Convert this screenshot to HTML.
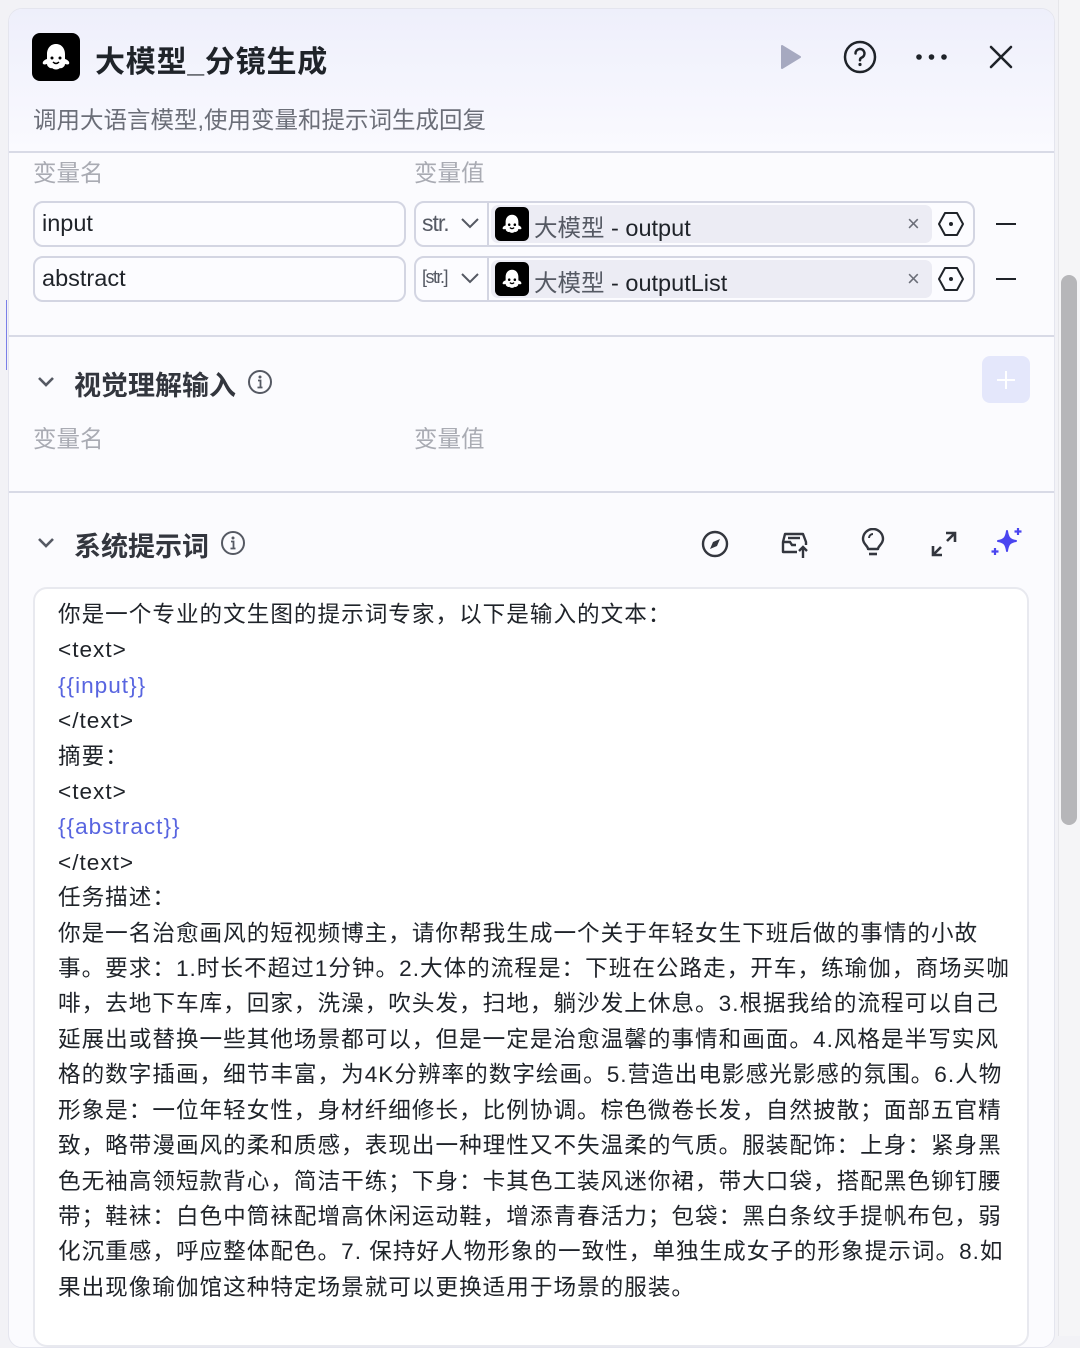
<!DOCTYPE html>
<html><head><meta charset="utf-8"><style>
*{margin:0;padding:0;box-sizing:border-box}
body{width:1080px;height:1336px;background:#f2f2f6;font-family:"Liberation Sans","Noto Sans CJK SC",sans-serif;color:#1f2329;position:relative;overflow:hidden}
.a{position:absolute}
.panel{left:8px;top:8px;width:1047px;height:1340px;background:#fbfbfe;border:1px solid #e4e5ee;border-radius:14px;overflow:hidden}
.hdr{left:0;top:0;width:1047px;height:144px;background:linear-gradient(#eeeffb,#fafaff);border-bottom:2px solid #d8dae6}
.lbl{color:#a9abb3;font-size:23.5px}
.inp{border:2px solid #d3d5e2;border-radius:10px;background:#fcfcff;height:46px}
.chip{background:#ececf4;border-radius:7px;height:38px}
.line{left:0;width:1047px;height:2px;background:#d8dae6}
.txt{left:58px;top:597px;font-size:22.6px;line-height:35.4px;white-space:nowrap;color:#1f2329;letter-spacing:1px}
.blue{color:#5865e0}
</style></head><body>
<div class="a" style="left:0;top:300px;width:7px;height:70px;border-right:1px solid #7a7fe8"></div>
<div class="a panel">
 <div class="a hdr"></div>
 <div class="a line" style="top:326px"></div>
 <div class="a line" style="top:482px"></div>
</div>
<div class="a" style="left:1058px;top:0;width:22px;height:1336px;background:#f5f5f7;border-left:1px solid #e6e6ea"></div>
<div class="a" style="left:1061px;top:275px;width:16px;height:550px;background:#b6b6b9;border-radius:8px"></div>

<svg class="a" style="left:32px;top:33px" width="48" height="48" viewBox="0 0 48 48"><rect width="48" height="48" rx="8" fill="#000"/><path d="M24 11c-6 0-9 5-9 10v5c-3 1-5 3-4 5 2 1 3 0 4 0 0 3 4 5 5 4 2 2 6 2 8 0 1 1 5-1 5-4 1 0 2 1 4 0 1-2-1-4-4-5v-5c0-5-3-10-9-10z" fill="#fff"/><circle cx="20" cy="25" r="1.5" fill="#000"/><circle cx="28" cy="25" r="1.5" fill="#000"/><path d="M21 29q3 3 6 0" stroke="#000" stroke-width="1.5" fill="none"/></svg>
<div class="a" style="left:95px;top:37px;font-size:30px;font-weight:bold;color:#1f2329;letter-spacing:0.8px">大模型_分镜生成</div>
<svg class="a" style="left:778px;top:44px" width="26" height="26"><path d="M4 2L22 13L4 24Z" fill="#a6a9c0" stroke="#a6a9c0" stroke-linejoin="round" stroke-width="2"/></svg>
<svg class="a" style="left:843px;top:40px" width="34" height="34" viewBox="0 0 34 34"><circle cx="17" cy="17" r="15" fill="none" stroke="#1f2329" stroke-width="2.5"/><path d="M12.5 13.5a4.5 4.5 0 1 1 6 4.2c-1.2.5-1.5 1.2-1.5 2.6" fill="none" stroke="#1f2329" stroke-width="2.5" stroke-linecap="round"/><circle cx="17" cy="24.5" r="1.6" fill="#1f2329"/></svg>
<svg class="a" style="left:914px;top:52px" width="36" height="10"><circle cx="5" cy="5" r="2.8" fill="#1f2329"/><circle cx="17.5" cy="5" r="2.8" fill="#1f2329"/><circle cx="30" cy="5" r="2.8" fill="#1f2329"/></svg>
<svg class="a" style="left:988px;top:44px" width="26" height="26"><path d="M3 3L23 23M23 3L3 23" stroke="#1f2329" stroke-width="2.6" stroke-linecap="round"/></svg>
<div class="a" style="left:33px;top:101px;font-size:23.5px;color:#6b6e78">调用大语言模型,使用变量和提示词生成回复</div>

<div class="a lbl" style="left:33px;top:154px">变量名</div>
<div class="a lbl" style="left:414px;top:154px">变量值</div>

<div class="a inp" style="left:33px;top:201px;width:373px"></div>
<div class="a" style="left:42px;top:210px;font-size:23.5px;color:#1f2329">input</div>
<div class="a inp" style="left:33px;top:256px;width:373px"></div>
<div class="a" style="left:42px;top:265px;font-size:23.5px;color:#1f2329">abstract</div>

<div class="a inp" style="left:414px;top:201px;width:561px"></div>
<div class="a inp" style="left:414px;top:256px;width:561px"></div>
<div class="a" style="left:487px;top:203px;width:2px;height:42px;background:#d3d5e2"></div>
<div class="a" style="left:487px;top:258px;width:2px;height:42px;background:#d3d5e2"></div>
<div class="a" style="left:422px;top:210px;font-size:23px;color:#555963;letter-spacing:-1px">str.</div>
<div class="a" style="left:422px;top:267px;font-size:18px;color:#555963;letter-spacing:-1.5px">[str.]</div>
<svg class="a" style="left:460px;top:216px" width="20" height="14"><path d="M2 3l8 8 8-8" fill="none" stroke="#555963" stroke-width="2"/></svg>
<svg class="a" style="left:460px;top:271px" width="20" height="14"><path d="M2 3l8 8 8-8" fill="none" stroke="#555963" stroke-width="2"/></svg>
<div class="a chip" style="left:491px;top:205px;width:441px"></div>
<div class="a chip" style="left:491px;top:260px;width:441px"></div>
<svg class="a" style="left:495px;top:207px" width="34" height="34" viewBox="0 0 48 48"><rect width="48" height="48" rx="8" fill="#000"/><path d="M24 11c-6 0-9 5-9 10v5c-3 1-5 3-4 5 2 1 3 0 4 0 0 3 4 5 5 4 2 2 6 2 8 0 1 1 5-1 5-4 1 0 2 1 4 0 1-2-1-4-4-5v-5c0-5-3-10-9-10z" fill="#fff"/><circle cx="20" cy="25" r="1.8" fill="#000"/><circle cx="28" cy="25" r="1.8" fill="#000"/><path d="M21 29q3 3 6 0" stroke="#000" stroke-width="1.8" fill="none"/></svg>
<svg class="a" style="left:495px;top:262px" width="34" height="34" viewBox="0 0 48 48"><rect width="48" height="48" rx="8" fill="#000"/><path d="M24 11c-6 0-9 5-9 10v5c-3 1-5 3-4 5 2 1 3 0 4 0 0 3 4 5 5 4 2 2 6 2 8 0 1 1 5-1 5-4 1 0 2 1 4 0 1-2-1-4-4-5v-5c0-5-3-10-9-10z" fill="#fff"/><circle cx="20" cy="25" r="1.8" fill="#000"/><circle cx="28" cy="25" r="1.8" fill="#000"/><path d="M21 29q3 3 6 0" stroke="#000" stroke-width="1.8" fill="none"/></svg>
<div class="a" style="left:534px;top:209px;font-size:23.5px;color:#1f2329"><span style="color:#555963">大模型</span> - output</div>
<div class="a" style="left:534px;top:264px;font-size:23.5px;color:#1f2329"><span style="color:#555963">大模型</span> - outputList</div>
<div class="a" style="left:907px;top:211px;font-size:22px;color:#6b6e78">×</div>
<div class="a" style="left:907px;top:266px;font-size:22px;color:#6b6e78">×</div>
<svg class="a" style="left:937px;top:210px" width="28" height="28"><path d="M8 3h12l6 11-6 11H8L2 14z" fill="none" stroke="#1f2329" stroke-width="2" stroke-linejoin="round"/><circle cx="14" cy="14" r="2" fill="#1f2329"/></svg>
<svg class="a" style="left:937px;top:265px" width="28" height="28"><path d="M8 3h12l6 11-6 11H8L2 14z" fill="none" stroke="#1f2329" stroke-width="2" stroke-linejoin="round"/><circle cx="14" cy="14" r="2" fill="#1f2329"/></svg>
<div class="a" style="left:996px;top:223px;width:20px;height:2px;background:#1f2329"></div>
<div class="a" style="left:996px;top:278px;width:20px;height:2px;background:#1f2329"></div>

<svg class="a" style="left:36px;top:374px" width="20" height="16"><path d="M3 4l7 7 7-7" fill="none" stroke="#555963" stroke-width="2.6"/></svg>
<div class="a" style="left:74px;top:364px;font-size:27px;font-weight:bold;color:#33363e">视觉理解输入</div>
<svg class="a" style="left:247px;top:369px" width="26" height="26"><circle cx="13" cy="13" r="11" fill="none" stroke="#555963" stroke-width="2"/><circle cx="13" cy="8" r="1.5" fill="#555963"/><path d="M11 11.5h2.5v7M10.5 18.5h5" stroke="#555963" stroke-width="1.8" fill="none"/></svg>
<div class="a" style="left:982px;top:356px;width:48px;height:47px;background:#e4e7fb;border-radius:8px"></div>
<svg class="a" style="left:994px;top:368px" width="24" height="24"><path d="M12 3v18M3 12h18" stroke="#fff" stroke-width="2"/></svg>
<div class="a lbl" style="left:33px;top:420px">变量名</div>
<div class="a lbl" style="left:414px;top:420px">变量值</div>

<svg class="a" style="left:36px;top:535px" width="20" height="16"><path d="M3 4l7 7 7-7" fill="none" stroke="#555963" stroke-width="2.6"/></svg>
<div class="a" style="left:74px;top:525px;font-size:27px;font-weight:bold;color:#33363e">系统提示词</div>
<svg class="a" style="left:220px;top:530px" width="26" height="26"><circle cx="13" cy="13" r="11" fill="none" stroke="#555963" stroke-width="2"/><circle cx="13" cy="8" r="1.5" fill="#555963"/><path d="M11 11.5h2.5v7M10.5 18.5h5" stroke="#555963" stroke-width="1.8" fill="none"/></svg>

<svg class="a" style="left:700px;top:529px" width="30" height="30"><circle cx="15" cy="15" r="12" fill="none" stroke="#33363e" stroke-width="2.4"/><path d="M20 10l-7 3-3 7 7-3z" fill="#33363e"/></svg>
<svg class="a" style="left:779px;top:528px" width="32" height="32"><path d="M6 6h18l3 8v10H4V14z" fill="none" stroke="#33363e" stroke-width="2.4" stroke-linejoin="round"/><path d="M4 14h7l2 3h4" fill="none" stroke="#33363e" stroke-width="2.4"/><path d="M9 10h12" stroke="#33363e" stroke-width="2.4"/><rect x="18" y="17" width="14" height="15" fill="#fbfbfe"/><path d="M24 30V20M20 23l4-4 4 4" fill="none" stroke="#33363e" stroke-width="2.4"/></svg>
<svg class="a" style="left:859px;top:528px" width="28" height="32"><path d="M9 21c0-3-5-5-5-10a10 10 0 0 1 20 0c0 5-5 7-5 10z" fill="none" stroke="#33363e" stroke-width="2.4" stroke-linejoin="round"/><path d="M10 26h8" stroke="#33363e" stroke-width="2.6"/><path d="M10 10a4 4 0 0 1 4-4" fill="none" stroke="#33363e" stroke-width="2"/></svg>
<svg class="a" style="left:929px;top:529px" width="30" height="30"><path d="M17 4h9v9M26 4l-8 8M13 26H4v-9M4 26l8-8" fill="none" stroke="#33363e" stroke-width="2.6"/></svg>
<svg class="a" style="left:990px;top:527px" width="34" height="32"><path d="M17 4c1 7 3 9 9 10-6 1-8 3-9 10-1-7-3-9-9-10 6-1 8-3 9-10z" fill="#4a45f0" stroke="#4a45f0" stroke-width="2" stroke-linejoin="round"/><path d="M28 1v7M24.5 4.5h7M5 21v7M1.5 24.5h7" stroke="#4a45f0" stroke-width="2.2"/></svg>

<div class="a" style="left:33px;top:587px;width:996px;height:760px;background:#fff;border:2px solid #e8e9ef;border-radius:14px"></div>
<div class="a txt">你是一个专业的文生图的提示词专家，以下是输入的文本：<br>&lt;text&gt;<br><span class="blue">{{input}}</span><br>&lt;/text&gt;<br>摘要：<br>&lt;text&gt;<br><span class="blue">{{abstract}}</span><br>&lt;/text&gt;<br>任务描述：<br>你是一名治愈画风的短视频博主，请你帮我生成一个关于年轻女生下班后做的事情的小故<br>事。要求：1.时长不超过1分钟。2.大体的流程是：下班在公路走，开车，练瑜伽，商场买咖<br>啡，去地下车库，回家，洗澡，吹头发，扫地，躺沙发上休息。3.根据我给的流程可以自己<br>延展出或替换一些其他场景都可以，但是一定是治愈温馨的事情和画面。4.风格是半写实风<br>格的数字插画，细节丰富，为4K分辨率的数字绘画。5.营造出电影感光影感的氛围。6.人物<br>形象是：一位年轻女性，身材纤细修长，比例协调。棕色微卷长发，自然披散；面部五官精<br>致，略带漫画风的柔和质感，表现出一种理性又不失温柔的气质。服装配饰：上身：紧身黑<br>色无袖高领短款背心，简洁干练；下身：卡其色工装风迷你裙，带大口袋，搭配黑色铆钉腰<br>带；鞋袜：白色中筒袜配增高休闲运动鞋，增添青春活力；包袋：黑白条纹手提帆布包，弱<br>化沉重感，呼应整体配色。7. 保持好人物形象的一致性，单独生成女子的形象提示词。8.如<br>果出现像瑜伽馆这种特定场景就可以更换适用于场景的服装。</div>
</body></html>
